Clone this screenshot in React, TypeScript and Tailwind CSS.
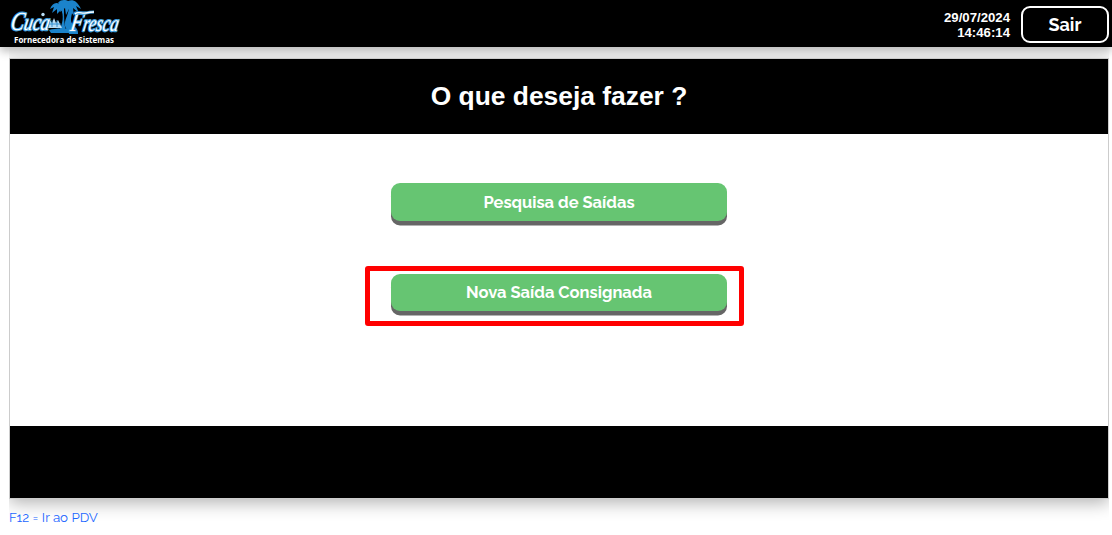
import { useState } from "react";

interface MenuButtonProps {
  label: string;
  className?: string;
}

const MenuButton = ({ label, className = "" }: MenuButtonProps) => {
  return (
    <button
      type="button"
      className={`flex w-[336px] items-center justify-center rounded-[9px] bg-[#66c572] font-['Raleway','Open_Sans',sans-serif] text-[16.5px] font-bold text-white shadow-[0_4.4px_0_#666] ${className}`}
    >
      {label}
    </button>
  );
};

const Logo = () => {
  return (
    <svg width="130" height="47" viewBox="0 0 130 47" className="block overflow-visible">
      {/* palm trees */}
      <g fill="#1b83cb">
        <path d="M53 7C49 1 44 2 41 9l4-2-2 6 5-4 0 5 4-4 3 1-1-3z" />
        <path d="M49 3c3-4 8-3 10-2 4-2 9-1 13 8l-5-3 3 7-6-5 1 8-5-7-3 6-1-7-5 4 1-6-5 2 3-4z" />
        <path d="M52 9c3 7 2 14-2 22h7c-2-7-2-14-2-22z" />
        <path d="M60 8c-1 8-5 12-4 18 1 4 4 4 4 8h9c1-7-7-8-7-14 0-5 2-7 1-12z" />
        <path d="M40 30c7-2 17-2 24 0l-1 3H42z" />
      </g>
      <g fill="#b9ddf5">
        <circle cx="34" cy="14.5" r="1.7" />
        <path d="M39 28l2-8 2 3 2-5 2 5 2-3 4 8z" />
      </g>
      <g stroke="#1b83cb" strokeWidth="0.8">
        <path d="M38 24h14M43 20v7M48 20v7" />
      </g>
      <g
        fontFamily="'Liberation Serif', serif"
        fontStyle="italic"
        fill="#fff"
        stroke="#3d9ad8"
        strokeWidth="2.4"
        strokeLinejoin="round"
        paintOrder="stroke"
        transform="translate(5 0) skewX(-10)"
      >
        <text x="1" y="30" fontSize="23" textLength="39" lengthAdjust="spacingAndGlyphs">
          <tspan fontSize="26">C</tspan>uca
        </text>
        <text x="61" y="31" fontSize="23" textLength="48" lengthAdjust="spacingAndGlyphs">
          <tspan fontSize="28">F</tspan>resca
        </text>
      </g>
      <path d="M66 14c3-3 7 0 11-1s6-1 8-1" stroke="#3d9ad8" strokeWidth="3" fill="none" />
      <path d="M66 14c3-3 7 0 11-1s6-1 8-1" stroke="#fff" strokeWidth="1.3" fill="none" />
      <text
        x="5"
        y="43"
        fontFamily="'Open Sans', sans-serif"
        fontSize="8"
        fontWeight="bold"
        fill="#fff"
        textLength="100"
        lengthAdjust="spacingAndGlyphs"
      >
        Fornecedora de Sistemas
      </text>
    </svg>
  );
};

export default function App() {
  const [now] = useState({ date: "29/07/2024", time: "14:46:14" });

  return (
    <div className="h-[535px] w-[1112px] overflow-hidden bg-white font-['Liberation_Sans',sans-serif]">
      <header className="flex h-[47px] justify-between bg-black pr-[3px] pl-[9px] shadow-[0_4px_9px_rgba(0,0,0,0.28)]">
        <Logo />
        <div className="flex">
          <div className="mt-[10px] mr-[11px] text-right text-[13.2px] leading-[15px] font-bold text-white">
            <div>{now.date}</div>
            <div>{now.time}</div>
          </div>
          <button
            type="button"
            className="mt-[6px] flex h-[37px] w-[88px] items-center justify-center rounded-[9px] border-2 border-white font-['Raleway','Open_Sans',sans-serif] text-[18px] font-bold text-white"
          >
            Sair
          </button>
        </div>
      </header>

      <div className="ml-[9px] h-[488px] w-[1100px] overflow-hidden pt-[11px]">
        <main className="flex h-[441px] flex-col border border-[#ccc] bg-white shadow-[0_4px_16px_rgba(0,0,0,0.3)]">
          <div className="flex h-[75px] items-center justify-center bg-black">
            <h1 className="text-[26.4px] font-bold text-white">O que deseja fazer ?</h1>
          </div>
          <div className="flex flex-1 flex-col items-center pt-[49px]">
            <MenuButton label="Pesquisa de Saídas" className="h-[38px]" />
            <div className="mt-[45px] mr-[9px] flex h-[60px] w-[379px] rounded-[3px] border-5 border-[#f00] pt-[3px] pl-[21px]">
              <MenuButton label="Nova Saída Consignada" className="h-[37px]" />
            </div>
          </div>
          <div className="h-[72px] bg-black" />
        </main>

        <footer className="mt-[8px] font-['Raleway','Open_Sans',sans-serif] text-[13.3px] leading-[20px] text-[#1a66ff]">
          F12 = Ir ao PDV
        </footer>
      </div>
    </div>
  );
}
